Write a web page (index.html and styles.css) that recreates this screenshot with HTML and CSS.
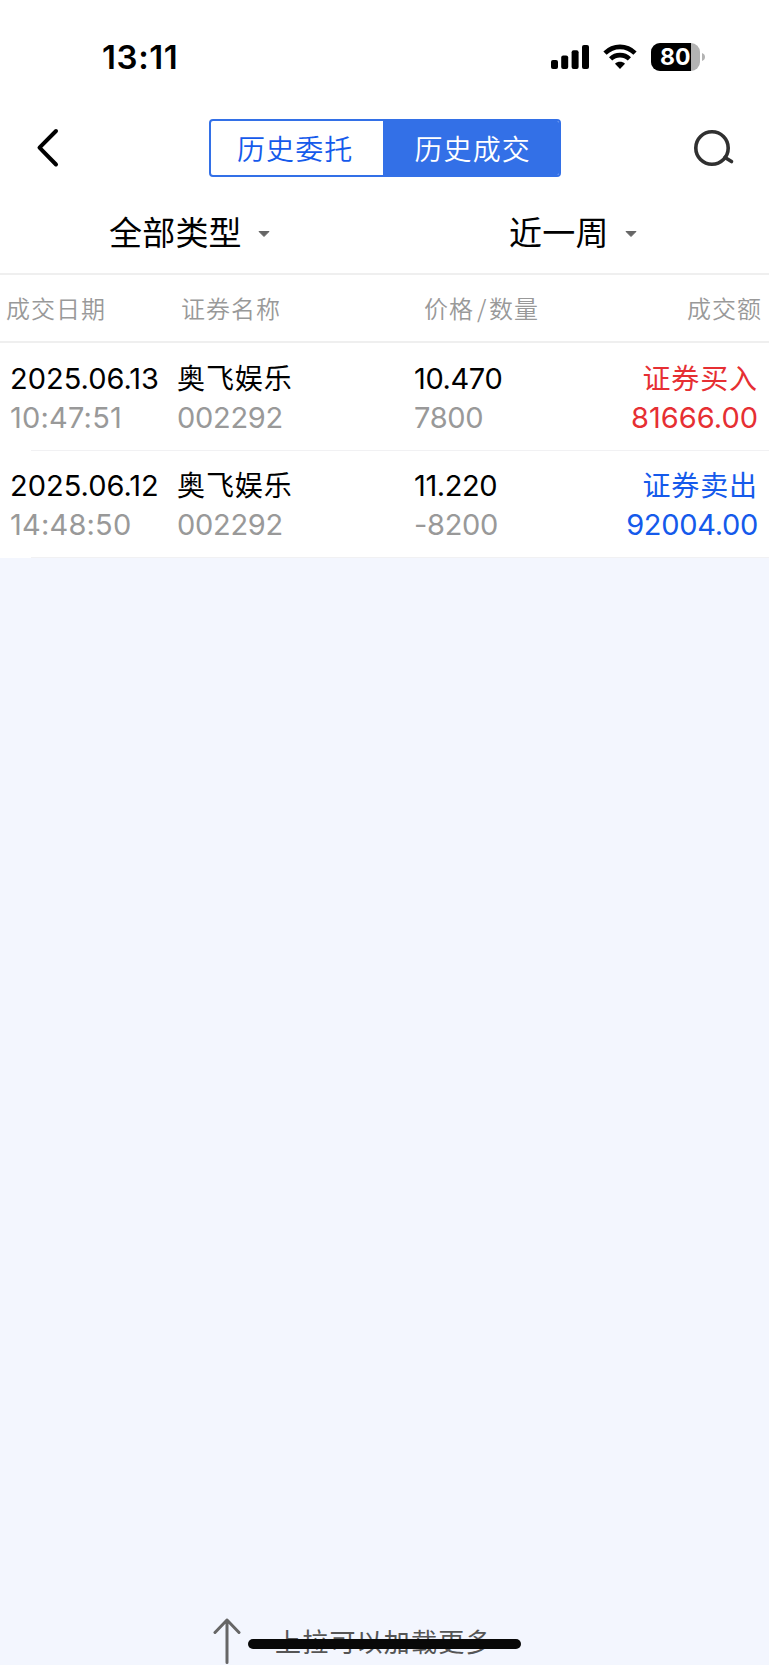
FILE: index.html
```html
<!DOCTYPE html>
<html lang="zh-CN">
<head>
<meta charset="utf-8">
<title>历史成交</title>
<link rel="stylesheet" href="styles.css">
</head>
<body>
<div class="screen">
  <div class="status">
    <span class="time">13:11</span>
    <div class="status-icons">
      <svg class="signal" width="38" height="24" viewBox="0 0 38 24">
        <rect x="0" y="15" width="7" height="9" rx="2"/><rect x="10.2" y="10.5" width="7" height="13.5" rx="2"/><rect x="20.6" y="5.2" width="7" height="18.8" rx="2"/><rect x="31" y="0" width="7" height="24" rx="2"/>
      </svg>
      <svg class="wifi" width="34" height="26" viewBox="0 0 34 26">
        <g fill="none" stroke="#000" stroke-width="4.6"><path d="M2 9.2C10.4.8 23.6.8 32 9.2"/><path d="M7.6 14.9c5.3-5.1 13.5-5.1 18.8 0"/></g>
        <path d="M17 25l-5-5.2c2.8-2.6 7.2-2.6 10 0z"/>
      </svg>
      <div class="battery"><span class="level">80</span></div>
      <svg class="battery-cap" width="3" height="8" viewBox="0 0 3 8"><path d="M0 0c4 1.200 4 6.800 0 8z"/></svg>
    </div>
  </div>
  <div class="nav">
    <svg class="back" width="24" height="40" viewBox="0 0 24 40"><path d="M20 3L3.500 19.700 20 36.500"/></svg>
    <div class="tabs"><span class="tab">历史委托</span><span class="tab active">历史成交</span></div>
    <svg class="search" width="42" height="38" viewBox="0 0 42 38"><circle cx="19" cy="19" r="16.200"/><path d="M32 28.500l6.500 4"/></svg>
  </div>
  <div class="filters">
    <div class="filter">全部类型<svg class="caret" width="12" height="8" viewBox="0 0 12 8"><path d="M1 1.500h10L6 6.500z"/></svg></div>
    <div class="filter recent">近一周<svg class="caret" width="12" height="8" viewBox="0 0 12 8"><path d="M1 1.500h10L6 6.500z"/></svg></div>
  </div>
  <div class="head"><span>成交日期</span><span>证券名称</span><span>价格<i class="slash">/</i>数量</span><span class="end">成交额</span></div>
  <div class="row">
    <div class="cell"><b class="date">2025.06.13</b><small class="clock">10:47:51</small></div>
    <div class="cell"><b class="han">奥飞娱乐</b><small class="code">002292</small></div>
    <div class="cell"><b class="price">10.470</b><small class="code">7800</small></div>
    <div class="cell end buy"><b class="han">证券买入</b><small>81666.00</small></div>
  </div>
  <div class="row">
    <div class="cell"><b class="date">2025.06.12</b><small class="clock">14:48:50</small></div>
    <div class="cell"><b class="han">奥飞娱乐</b><small class="code">002292</small></div>
    <div class="cell"><b class="price">11.220</b><small class="code">-8200</small></div>
    <div class="cell end sell"><b class="han">证券卖出</b><small class="code">92004.00</small></div>
  </div>
  <div class="more">
    <svg class="arrow" width="28" height="48" viewBox="0 0 28 48"><path d="M14 45.500V3M2 15.500L14 3l12 12.500"/></svg>
    <span class="more-text">上拉可以加载更多</span>
    <div class="home-bar"></div>
  </div>
</div>
</body>
</html>
```
FILE: styles.css
```css
* { box-sizing: border-box; }
body { margin: 0; background: #f3f6fe; font-family: Inter, "Noto Sans CJK SC", sans-serif; color: #000; }
.screen { width: 769px; height: 1665px; display: flex; flex-direction: column; overflow: hidden; }
svg { display: block; flex: none; }

.status { height: 110px; flex: none; background: #fff; display: flex; justify-content: space-between; padding: 38px 64px 0 102px; }
.time { font-size: 33px; line-height: 38px; font-weight: 600; letter-spacing: 0.6px; }
.status-icons { display: flex; height: 38px; align-items: center; }
.wifi { margin-left: 14px; }
.battery { width: 49px; height: 28px; margin-left: 14px; border-radius: 9px; overflow: hidden; background: #b3b3b3; }
.level { display: block; width: 40px; height: 28px; padding-left: 9px; background: #000; color: #fff; font-size: 23px; font-weight: 700; line-height: 28px; letter-spacing: 0; }
.battery-cap { margin-left: 2px; fill: #b3b3b3; }

.nav { height: 78px; flex: none; background: #fff; display: flex; justify-content: space-between; align-items: center; padding: 0 34px 2px 36px; }
.back { fill: none; stroke: #000; stroke-width: 4; stroke-linecap: round; stroke-linejoin: round; }
.search { fill: none; stroke: #303030; stroke-width: 3.6; stroke-linecap: round; }
.tabs { display: flex; width: 352px; height: 58px; margin: 0 0 0 16px; border: 2px solid #3370e7; border-radius: 4px; overflow: hidden; background: #fff; }
.tab { flex: 0 0 172px; padding-left: 26.5px; font: 350 28px/54px "Noto Sans CJK SC", sans-serif; letter-spacing: 1.1px; color: #155aeb; white-space: nowrap; }
.tab.active { flex: 1; padding-left: 32px; background: #3370e7; color: #fff; }

.filters { height: 87px; flex: none; display: flex; background: #fff; border-bottom: 2px solid #efefef; }
.filter { flex: 0 0 400px; display: flex; align-items: center; padding: 0 0 0 109px; font: 400 33px/48px "Noto Sans CJK SC", sans-serif; letter-spacing: 0.2px; height: 86px; }
.recent { flex: 1; }
.caret { margin: 6px 0 0 16px; fill: #666; stroke: #666; stroke-linejoin: round; }

.head { height: 68px; flex: none; display: grid; grid-template-columns: 175px 243px 1fr auto; padding: 0 7px 0 6px; background: #fff; border-bottom: 2px solid #efefef; color: #999; font: 350 24px/66px "Noto Sans CJK SC", sans-serif; letter-spacing: 1px; }
.slash { font-style: normal; padding: 0 1.5px 0 3px; }
.row { height: 107.5px; flex: none; display: grid; grid-template-columns: 167px 237px 1fr auto; padding: 16px 11px 0 10px; background: linear-gradient(#f1f1f3, #f1f1f3) 31px 100% / 100% 1px no-repeat #fff; }
.row + .row { padding-top: 15.5px; }
.cell { display: flex; flex-direction: column; }
.cell b { font-size: 29px; line-height: 39px; font-weight: 400; }
.cell small { font-size: 29px; line-height: 39px; color: #999; }
.cell .clock { letter-spacing: 0.2px; }
.cell .price { letter-spacing: -0.4px; }
.cell .code { letter-spacing: -0.3px; }
.cell .han { font: 400 28px/37px "Noto Sans CJK SC", sans-serif; height: 39px; letter-spacing: 0.9px; }
.end { text-align: right; }
.buy b, .buy small { color: #e62f33; }
.sell b, .sell small { color: #155aeb; }

.more { position: relative; height: 60px; flex: none; margin-top: auto; display: flex; align-items: flex-start; padding-left: 213px; }
.arrow { margin-top: 12px; fill: none; stroke: #666; stroke-width: 3; stroke-linecap: round; stroke-linejoin: round; }
.more-text { margin: 16px 0 0 34px; font: 26px/40px "Noto Sans CJK SC", sans-serif; letter-spacing: 1.2px; color: #555; }
.home-bar { position: absolute; left: 248px; top: 34px; width: 273px; height: 10px; border-radius: 5px; background: #080808; }
```
